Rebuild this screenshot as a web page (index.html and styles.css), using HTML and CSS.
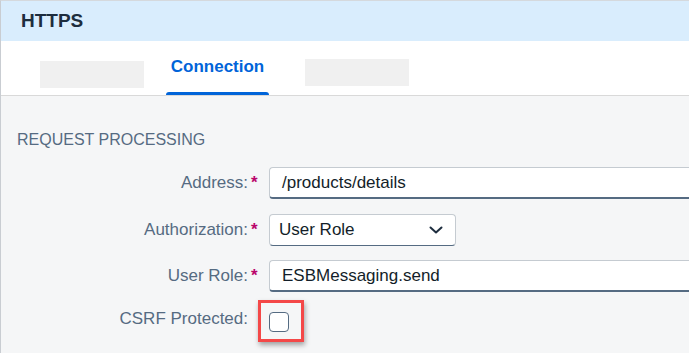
FILE: index.html
```html
<!DOCTYPE html>
<html lang="en">
<head>
    <meta charset="UTF-8">
    <meta name="viewport" content="width=device-width, initial-scale=1.0">
    <title>HTTPS Connection</title>
    <link rel="stylesheet" href="styles.css">
</head>
<body>
    <div class="panel">
        <div class="header">HTTPS</div>
        <div class="tabs">
            <span class="tab-blank first"></span>
            <div class="tab active">Connection</div>
            <span class="tab-blank last"></span>
        </div>
        <div class="content">
            <h2 class="section-title">REQUEST PROCESSING</h2>
            <div class="form">
                <label class="label">Address:</label>
                <span class="required">*</span>
                <div class="input">/products/details</div>

                <label class="label">Authorization:</label>
                <span class="required">*</span>
                <div class="select">
                    <span>User Role</span>
                    <svg width="14" height="8" viewBox="0 0 14 8">
                        <path d="M1.5 1.5 L7 6.5 L12.5 1.5" fill="none" stroke="#1d2d3e" stroke-width="2" stroke-linecap="round" stroke-linejoin="round"/>
                    </svg>
                </div>

                <label class="label">User Role:</label>
                <span class="required">*</span>
                <div class="input">ESBMessaging.send</div>

                <label class="label">CSRF Protected:</label>
                <span></span>
                <div class="check-cell">
                    <span class="checkbox"></span>
                </div>
            </div>
        </div>
    </div>
</body>
</html>
```

FILE: styles.css
```css
body {
    margin: 0;
    overflow: hidden;
    background: #f5f6f7;
    font-family: "Liberation Sans", Arial, sans-serif;
    color: #1d2d3e;
}

.panel {
    width: 689px;
    height: 353px;
    border-top: 1px solid #d5d9dd;
    border-left: 1px solid #c9cdd2;
    box-sizing: border-box;
    background: #f5f6f7;
}

.header {
    height: 40px;
    display: flex;
    align-items: center;
    padding-left: 20px;
    background: #d9edfd;
    font-size: 19px;
    font-weight: bold;
    color: #1d2d3e;
}

.tabs {
    height: 54px;
    display: flex;
    align-items: flex-start;
    padding-left: 39px;
    background: #fff;
    border-bottom: 1px solid #d9d9d9;
}

.tab-blank {
    width: 104px;
    height: 27px;
    background: #f0f0f0;
}

.tab-blank.first {
    margin-top: 20px;
    margin-right: 22px;
}

.tab-blank.last {
    margin-top: 18px;
}

.tab {
    width: 103px;
    height: 54px;
    margin-right: 36px;
    padding-top: 16px;
    box-sizing: border-box;
    text-align: center;
    font-size: 17px;
    line-height: 20px;
    font-weight: bold;
    position: relative;
}

.tab.active {
    color: #0064d9;
}

.tab.active::after {
    content: "";
    position: absolute;
    left: 0;
    right: 0;
    bottom: 0;
    height: 3px;
    border-radius: 3px 3px 0 0;
    background: #0064d9;
}

.content {
    padding-top: 34px;
}

.section-title {
    margin: 0 0 17px 16px;
    font-size: 16px;
    line-height: 20px;
    font-weight: normal;
    color: #556b82;
}

.form {
    display: grid;
    grid-template-columns: 247px 21px 1fr;
    row-gap: 14.5px;
    align-items: center;
    font-size: 17px;
}

.label {
    text-align: right;
    color: #556b82;
}

.required {
    padding-left: 3px;
    color: #ba066c;
    font-weight: bold;
    align-self: start;
    padding-top: 6px;
    line-height: 20px;
}

.input,
.select {
    height: 32px;
    box-sizing: border-box;
    display: flex;
    align-items: center;
    background: #fff;
    border: 1px solid #c5cbd1;
    border-bottom: 2px solid #556b82;
    border-radius: 4px;
    color: #131e29;
}

/* the text fields run on past the right edge of the panel */
.input {
    padding-left: 12px;
    border-right: none;
    border-radius: 4px 0 0 4px;
}

.select {
    width: 187px;
    padding: 0 12px 0 9px;
    justify-content: space-between;
    border-bottom-width: 1px;
    border-bottom-color: #556b82;
}

.check-cell {
    padding-top: 5.5px;
    display: flex;
}

.checkbox {
    width: 20px;
    height: 20px;
    box-sizing: border-box;
    border: 1px solid #556b82;
    border-radius: 4px;
    background: #fff;
    position: relative;
}

.checkbox::after {
    content: "";
    position: absolute;
    left: -12px;
    top: -13px;
    right: -16px;
    bottom: -11px;
    border: 3px solid #f44848;
    box-shadow: 1px 3px 5px rgba(0, 0, 0, 0.35);
}
```
